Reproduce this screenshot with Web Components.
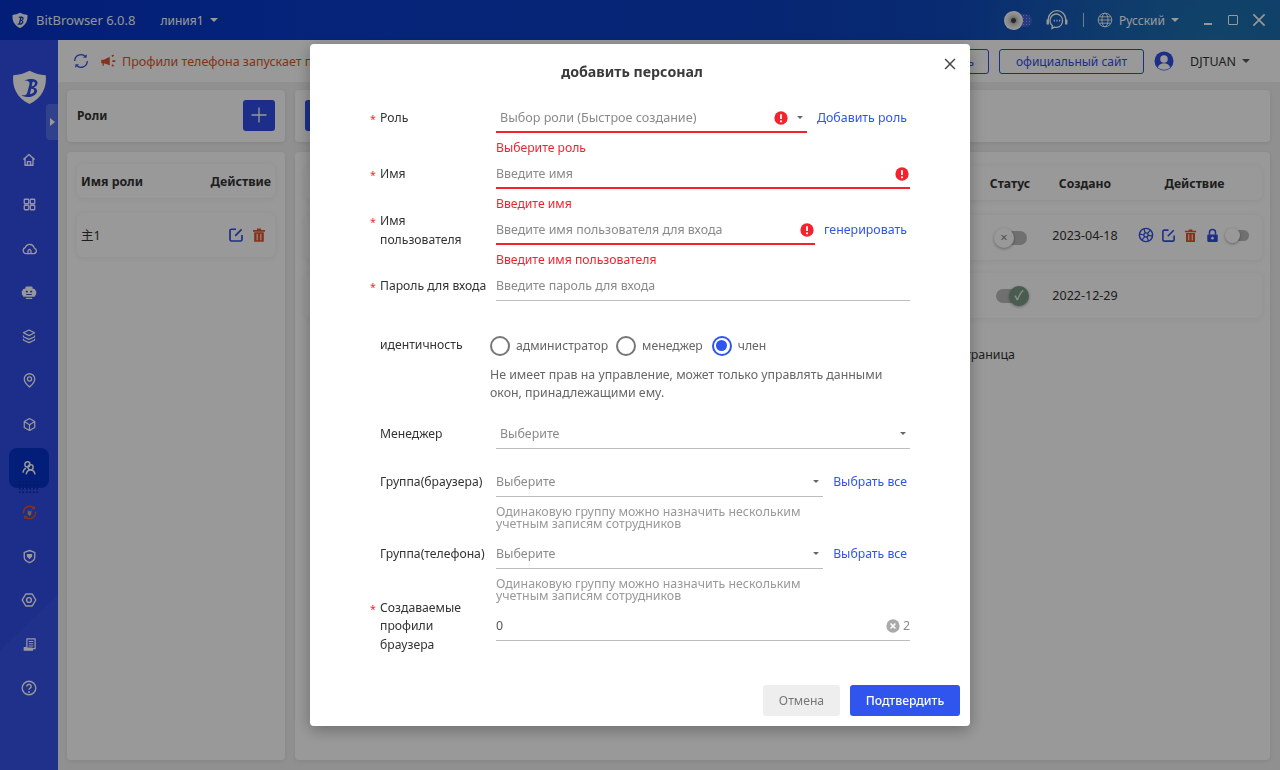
<!DOCTYPE html>
<html lang="ru"><head><meta charset="utf-8"><title>BitBrowser</title>
<style>
html,body{margin:0;height:100%;overflow:hidden}
body{font-family:"Noto Sans","Noto Sans CJK SC",sans-serif;font-size:12px;color:#333}
</style></head><body>
<bb-app></bb-app>
<script>
const ICONS={
home:'<path d="M3 9.500 10 3l7 6.500M5 8v8.500h10V8M8 16.500V12h4v4.500" fill="none" stroke="currentColor" stroke-width="1.700" stroke-linejoin="round"/>',
grid:'<g fill="none" stroke="currentColor" stroke-width="1.700"><rect x="3" y="3" width="6" height="6" rx="1"/><rect x="11" y="3" width="6" height="6" rx="1"/><rect x="3" y="11" width="6" height="6" rx="1"/><rect x="11" y="11" width="6" height="6" rx="1"/></g>',
cloud:'<path d="M6 16h9a3.200 3.200 0 0 0 .6-6.300A5.500 5.500 0 0 0 5 9a3.600 3.600 0 0 0 1 7ZM8.300 16v-3.500l1.700-1.500 1.700 1.500V16" fill="none" stroke="currentColor" stroke-width="1.500" stroke-linejoin="round"/>',
robot:'<path fill-rule="evenodd" d="M7 3h6a1.500 1.500 0 0 1 1.500 1.500V6H16a2 2 0 0 1 2 2v.5h1v5h-1v.5a2 2 0 0 1-2 2H4a2 2 0 0 1-2-2v-.5H1v-5h1V8a2 2 0 0 1 2-2h1.500V4.500A1.500 1.500 0 0 1 7 3ZM6 8.300v2.200h2.500V8.300ZM11.500 8.300v2.200H14V8.300ZM6.500 12.500v1.300h7v-1.300Z" fill="currentColor"/><path d="M6 18h8" stroke="currentColor" stroke-width="1.500"/>',
layers:'<path d="m10 2.500 7 3.500-7 3.500L3 6zM3 9.500c0 1 0 1.500.5 1.800l6.500 3 6.500-3c.5-.3.5-.8.5-1.800M3 13.500c0 1 0 1.500.5 1.800l6.500 3 6.500-3c.5-.3.5-.8.5-1.800" fill="none" stroke="currentColor" stroke-width="1.600" stroke-linejoin="round"/>',
pin:'<path d="M10 18.500s-7-5.500-7-10.500a7 7 0 0 1 14 0c0 5-7 10.500-7 10.500Z" fill="none" stroke="currentColor" stroke-width="1.700"/><circle cx="10" cy="8" r="2.800" fill="none" stroke="currentColor" stroke-width="1.700"/>',
box:'<path d="m10 2 7 4v8l-7 4-7-4V6ZM3 6l7 4.200L17 6M10 10.200V18" fill="none" stroke="currentColor" stroke-width="1.600" stroke-linejoin="round"/>',
team:'<g fill="none" stroke="currentColor" stroke-width="1.800"><circle cx="8" cy="5.500" r="3.200"/><circle cx="12" cy="9" r="3.200"/><path d="M2.500 16c.2-3 1.800-5 3.800-5.800M6.500 18c.4-3.200 2.700-5.500 5.500-5.500s5 2.300 5.500 5.500"/></g>',
sync:'<g fill="none" stroke="currentColor" stroke-width="1.800"><path d="M3 11a7.200 7.200 0 0 1 12.300-6"/><path d="M17 9a7.200 7.200 0 0 1-12.300 6"/></g><path d="m16.500 2.200-.2 4.300-4.200-.6zM3.500 17.800l.2-4.300 4.200.6z" fill="currentColor"/><path d="M7.800 6.500 9 8.500h2l1.200-2v5.500L10 14l-2.200-2z" fill="#c98"/>',
shield:'<path d="M10 2 17 4.500v6.500c0 3.500-3 5.700-7 7.300-4-1.600-7-3.800-7-7.300V4.500Z" fill="none" stroke="currentColor" stroke-width="1.800"/><path d="M6.500 6.500h7v3.500L10 13.500 6.500 10z" fill="currentColor"/>',
hex:'<path d="M6 2.500h8L18.500 10 14 17.500H6L1.500 10Z" fill="none" stroke="currentColor" stroke-width="1.800" stroke-linejoin="round"/><circle cx="10" cy="10" r="3" fill="none" stroke="currentColor" stroke-width="1.800"/>',
doc:'<path d="M6.500 2.500h11v13H14v2H3v-3.500h3.500z" fill="none" stroke="currentColor" stroke-width="1.600" stroke-linejoin="round"/><path d="M9 6h6M9 9h6M9 12h6" stroke="currentColor" stroke-width="1.500"/><path d="M3 14h11v3.500H3z" fill="currentColor"/>',
help:'<circle cx="10" cy="10" r="8.500" fill="none" stroke="currentColor" stroke-width="1.700"/><path d="M7.300 8a2.700 2.700 0 1 1 4.100 2.300c-.9.600-1.400 1-1.400 2" fill="none" stroke="currentColor" stroke-width="1.800"/><circle cx="10" cy="15" r="1.200" fill="currentColor"/>',
edit:'<path d="M10 2.800H4.500a2 2 0 0 0-2 2v10.700a2 2 0 0 0 2 2h11a2 2 0 0 0 2-2V10M9 11l8-8" fill="none" stroke="currentColor" stroke-width="2.100"/>',
trash:'<path d="M2.500 3.800h15v2h-15zM7.500 2h5v1.800h-5zM4 6.500h12V18.500H4z" fill="currentColor"/><path d="M7.700 8.500v8M12.300 8.500v8" stroke="#fff" stroke-width="1.300"/>',
refresh:'<path d="M3 10a7 7 0 0 1 12-4.900M17 10a7 7 0 0 1-12 4.900" fill="none" stroke="currentColor" stroke-width="1.400"/><path d="m16.500 2.500-.4 4-4-.4zM3.500 17.500l.4-4 4 .4z" fill="currentColor"/>',
horn:'<path d="M1.500 8h3l7-3.500v10l-7-2.500V15H3v-3H1.500z" fill="currentColor"/><path d="M14 4l2-1.500M14.500 9.500h3.500M14 14l2 1.500" stroke="currentColor" stroke-width="2" fill="none"/>',
wheel:'<circle cx="10" cy="10" r="8.300" fill="none" stroke="currentColor" stroke-width="1.800"/><circle cx="10" cy="10" r="2.600" fill="none" stroke="currentColor" stroke-width="1.500"/><path d="M7.500 2.500 9 7.500M15.500 4l-3.500 4M18 11l-5.500-.5M13 17.500 11.200 12.300M5 16.500l3-4M2 9l5.500 1" stroke="currentColor" stroke-width="1.500"/>',
lock:'<path d="M6 9V6a4 4 0 0 1 8 0v3" fill="none" stroke="currentColor" stroke-width="2"/><rect x="3" y="8.500" width="14" height="10" rx="1.500" fill="currentColor"/><circle cx="10" cy="13.500" r="1.700" fill="#fff"/>',
user:'<circle cx="10" cy="10" r="9.500" fill="currentColor"/><circle cx="10" cy="8" r="3.800" fill="#fff"/><path d="M3.800 16.500c1-3 3.500-4.300 6.200-4.300s5.200 1.300 6.200 4.300A8.500 8.500 0 0 1 10 18.800a8.500 8.500 0 0 1-6.200-2.300Z" fill="#fff"/>',
headset:'<g fill="none" stroke="currentColor" stroke-width="1.100"><path d="M2.700 11V9.500a7.300 7.300 0 0 1 14.600 0V11"/><path d="M10 5a5.700 5.700 0 0 1 0 11.200c-.8 0-1.500-.1-2.200-.3L5.800 17l.4-2.300A5.500 5.500 0 0 1 10 5Z"/></g><path d="M2.300 9.500v4.300M17.700 9.500v4.300" stroke="currentColor" stroke-width="2"/><path d="M7.300 10.500h1M9.500 10.500h1M11.700 10.500h1" stroke="currentColor" stroke-width="1.400"/>',
globe:'<g fill="none" stroke="currentColor" stroke-width="1.100"><circle cx="10" cy="10" r="8.500"/><ellipse cx="10" cy="10" rx="3.800" ry="8.500"/><path d="M1.500 10h17M2.800 6h14.400M2.800 14h14.400"/></g>',
err:'<circle cx="10" cy="10" r="9.500" fill="currentColor"/><path d="M10 4.500v7" stroke="#fff" stroke-width="2.600"/><circle cx="10" cy="14.700" r="1.600" fill="#fff"/>',
clear:'<circle cx="10" cy="10" r="9.500" fill="currentColor"/><path d="m6.500 6.500 7 7m0-7-7 7" stroke="#fff" stroke-width="2.200"/>',
plus:'<path d="M10 2.500v15M2.500 10h15" stroke="currentColor" stroke-width="1.300"/>',
close:'<path d="m3 3 14 14m0-14L3 17" stroke="currentColor" stroke-width="2"/>',
logo:'<path d="M10 1c3 1.600 6 2.400 9.300 2.600C20 10 17.500 16.500 10 20 2.500 16.500 0 10 .7 3.600 4 3.400 7 2.600 10 1Z" fill="currentColor"/><path d="M7 6.600c2.500-1.200 7.600-1.500 7.600 1.400 0 1.200-1 2.100-2.300 2.500 1.400.2 2.200 1.100 2 2.300-.3 2-3 3.200-5 3.200-1.500 0-3-.4-4-1.200 1.500.4 3 .2 3.400-1.300l1.300-5c.3-1.200-1-2-3-1.900Zm4.800.7-.6 2.600c1.300-.2 1.900-.8 1.900-1.600 0-.8-.5-1.100-1.300-1ZM11 11.300l-.8 3c1.400-.1 2.400-.7 2.500-1.700.1-.9-.6-1.300-1.700-1.300Z" fill="var(--logo-b,#2f4de6)" fill-rule="evenodd"/>'
};
function def(name,css,html,init){
  customElements.define(name,class extends HTMLElement{
    connectedCallback(){
      if(this.shadowRoot)return;
      const r=this.attachShadow({mode:'open'});
      r.innerHTML='<style>'+css+'</style>'+(typeof html==='function'?html(this):html);
      if(init)init(this,r);
    }
  });
}
def('bb-icon',':host{display:inline-flex;flex:none;line-height:0}svg{display:block;width:100%;height:100%}',
  h=>`<svg viewBox="0 0 20 20" aria-hidden="true">${ICONS[h.getAttribute('name')]||''}</svg>`,
  h=>{const s=h.getAttribute('size')||16;h.style.width=s+'px';h.style.height=s+'px';if(h.getAttribute('color'))h.style.color=h.getAttribute('color');});
const caret=(c,s=4)=>`<span style="display:inline-block;width:0;height:0;border:${s}px solid transparent;border-top:${s}px solid ${c};border-bottom:0;flex:none"></span>`;

def('bb-topbar',`:host{display:flex;align-items:center;grid-column:1/3;height:40px;color:#fff;
  background:radial-gradient(circle at 95% 110%,rgba(40,150,160,.45),transparent 22%),linear-gradient(90deg,#0632c8 0%,#0a3ecb 30%,#0b3fc0 60%,#1558b8 100%);font-size:13px}
  .brand{margin-left:12px;display:flex;align-items:center;gap:8px;font-size:13px;opacity:.95}
  .line{margin-left:25px;display:flex;align-items:center;gap:6px;font-size:12px}
  .sp{flex:1}
  .tog{width:28px;height:13px;border-radius:7px;background:radial-gradient(circle,rgba(255,255,255,.4) .8px,transparent 1px) 0 0/3px 3px,#3f62d8;position:relative;margin-right:13px}
  .tog i{position:absolute;left:0;top:-3px;width:19px;height:19px;border-radius:50%;background:radial-gradient(circle,#444 0 2px,#bbb 3px,#ddd 5px,#fff 9px)}
  .div{width:1px;height:14px;background:rgba(255,255,255,.7);margin:0 13px 0 14px}
  .lang{display:flex;align-items:center;gap:6px;font-size:12px}
  .win{display:flex;align-items:center;margin:0 13px 0 25px}
  .min{width:8px;height:2px;background:#fff;align-self:flex-end;margin:0 16px 3px 0}
  .max{width:8px;height:8px;border:1.500px solid #fff;border-radius:1px;margin-right:13px}`,
  `<div class="brand"><bb-icon name="logo" size="16" style="--logo-b:#0632c8"></bb-icon><span>BitBrowser 6.0.8</span></div>
   <div class="line"><span>линия1</span>${caret('#fff')}</div><div class="sp"></div>
   <div class="tog"><i></i></div><bb-icon name="headset" size="24"></bb-icon><div class="div"></div>
   <div class="lang"><bb-icon name="globe" size="16"></bb-icon><span>Русский</span>${caret('#fff')}</div>
   <div class="win"><span class="min"></span><span class="max"></span><bb-icon name="close" size="16"></bb-icon></div>`);

def('bb-nav',`:host{display:flex;width:40px;height:44px;align-items:center;justify-content:center;margin-left:9px;color:#fff;position:relative}
  :host([active]) .w{background:#0632c8}
  .w{width:40px;height:40px;border-radius:8px;display:flex;align-items:center;justify-content:center}
  :host([red]) {color:#e0532a}
  :host([red])::before{content:"";position:absolute;left:9px;top:-10px;width:22px;height:15px;background:radial-gradient(circle,rgba(6,40,170,.9) 1px,transparent 1.200px) 0 0/3.500px 3.500px}`,
  h=>`<div class="w"><bb-icon name="${h.getAttribute('name')}" size="${h.getAttribute('size')||16}"></bb-icon></div>`);

def('bb-sidebar',`:host{display:block;width:58px;background:
   linear-gradient(#3653e8,#3653e8) 0 610px/58px 120px no-repeat,
   linear-gradient(to bottom right,transparent 50%,#3653e8 50.500%) 0 555px/58px 55px no-repeat,#2f4de6;position:relative;overflow:hidden;color:#fff}
  .logo{display:flex;justify-content:flex-start;padding:29px 0 32px 12px;height:37px}
  .tab{position:absolute;right:0;top:64px;width:12px;height:36px;background:rgba(255,255,255,.18);border-radius:4px 0 0 4px;display:flex;align-items:center;justify-content:center}
  .tab i{width:0;height:0;border:4px solid transparent;border-left:5px solid #fff;border-right:0}`,
  `<div class="logo"><bb-icon name="logo" size="35"></bb-icon></div><div class="tab"><i></i></div>
   <bb-nav name="home" size="16"></bb-nav><bb-nav name="grid" size="15"></bb-nav><bb-nav name="cloud" size="17"></bb-nav><bb-nav name="robot" size="16"></bb-nav>
   <bb-nav name="layers" size="16"></bb-nav><bb-nav name="pin" size="15"></bb-nav><bb-nav name="box" size="15"></bb-nav><bb-nav name="team" active size="16"></bb-nav>
   <bb-nav name="sync" red size="17"></bb-nav><bb-nav name="shield" size="15"></bb-nav><bb-nav name="hex" size="16"></bb-nav><bb-nav name="doc" size="15"></bb-nav><bb-nav name="help" size="16"></bb-nav>`);

def('bb-toolbar',`:host{display:flex;align-items:center;height:42px;background:#fff;padding-left:14px;color:#333;font-size:12px;overflow:hidden}
  .w{margin-left:10px;color:#e0532a;display:flex;align-items:center;gap:5px;white-space:nowrap;font-size:12.500px}
  .sp{flex:1}
  .btn{border:1px solid #2f4de6;border-radius:3px;color:#2f4de6;display:flex;align-items:center;justify-content:center;box-sizing:border-box;height:25px}
  .b1{width:60px;justify-content:flex-end;padding-right:14px;margin-right:10px}
  .b2{width:145px}
  .u{margin:0 30px 0 10px;display:flex;align-items:center;gap:6px}
  .u .n{margin-left:10px;font-size:12.500px}`,
  `<bb-icon name="refresh" size="18" color="#2f4de6"></bb-icon>
   <div class="w"><bb-icon name="horn" size="17"></bb-icon><span>Профили телефона запускает п</span></div><div class="sp"></div>
   <div class="btn b1">ь</div><div class="btn b2">официальный сайт</div>
   <div class="u"><bb-icon name="user" size="20" color="#2f4de6"></bb-icon><span class="n">DJTUAN</span>${caret('#555')}</div>`);

def('bb-card',`:host{display:block;background:#fff;border-radius:4px;box-shadow:0 1px 4px rgba(0,0,0,.08);box-sizing:border-box;position:relative}`,`<slot></slot>`);
def('bb-row',`:host{display:flex;align-items:center;background:#fff;border-radius:6px;box-shadow:0 1px 6px rgba(0,0,0,.07)}`,`<slot></slot>`);

def('bb-toggle',`:host{display:inline-block;position:relative;width:30px;height:14px;border-radius:7px;background:#bbb;flex:none}
  i{position:absolute;top:-3px;width:20px;height:20px;border-radius:50%;background:#fff;box-shadow:0 1px 3px rgba(0,0,0,.35);display:flex;align-items:center;justify-content:center;font-style:normal;font-size:13px;line-height:1;color:#888}
  :host([on]) i{background:#7c9a84;color:#fff;right:-3px}
  :host(:not([on])) i{left:-3px}
  :host([small]){width:22px;height:11px}
  :host([small]) i{width:15px;height:15px;top:-2px;left:-2px}`,
  h=>`<i>${h.hasAttribute('small')?'':h.hasAttribute('on')?'✓':'×'}</i>`);

def('bb-main',`:host{display:grid;grid-template-columns:218px 1fr;grid-template-rows:52px 608px;gap:10px;padding:8px 10px 0 9px;background:#f0f0f0;min-width:0}
  .head{display:flex;align-items:center;height:100%;padding:0 10px 2px;box-sizing:border-box;font-weight:700;font-size:12px;color:#333;justify-content:space-between}
  .add{width:32px;height:31px;background:#2f4de6;border-radius:3px;color:#fff;display:flex;align-items:center;justify-content:center}
  .tbl{padding:12px 10px;display:flex;flex-direction:column;gap:15px;height:100%;box-sizing:border-box}
  .l{height:34px;padding:0 4px;justify-content:space-between;font-weight:700;font-size:12.300px}
  .r{height:44px;padding:0 4px;justify-content:space-between;font-size:12.500px}
  .r .nm{margin-top:-2px}
  .ic{display:flex;gap:7px;margin-right:4px}
  .wide{display:grid!important;grid-template-columns:1fr 70px 80px 137px;align-items:center;justify-items:center}
  .wh{height:34px;font-weight:700;font-size:12.200px}
  .wr{height:45px;font-size:12.500px}
  .up{padding-bottom:5px;box-sizing:border-box}
  .ac{display:flex;align-items:center;gap:7px}
  .foot{text-align:right;padding-right:247px;font-size:12.400px;margin-top:13px;color:#333}`,
  `<bb-card><div class="head"><span>Роли</span><div class="add"><bb-icon name="plus" size="20"></bb-icon></div></div></bb-card>
   <bb-card><div class="head"><div class="add"><bb-icon name="plus" size="20"></bb-icon></div></div></bb-card>
   <bb-card><div class="tbl">
     <bb-row class="l"><span>Имя роли</span><span>Действие</span></bb-row>
     <bb-row class="r"><span class="nm">主1</span><span class="ic"><bb-icon name="edit" size="16" color="#2f4de6"></bb-icon><bb-icon name="trash" size="16" color="#e0532a"></bb-icon></span></bb-row>
   </div></bb-card>
   <bb-card><div class="tbl" style="padding:14px 8px 12px 10px">
     <bb-row class="wide wh"><span></span><span>Статус</span><span>Создано</span><span style="margin-left:2px">Действие</span></bb-row>
     <bb-row class="wide wr up"><span></span><bb-toggle style="margin:5px 0 0 4px"></bb-toggle><span>2023-04-18</span><span class="ac"><bb-icon name="wheel" size="16" color="#2f4de6"></bb-icon><bb-icon name="edit" size="15" color="#2f4de6"></bb-icon><bb-icon name="trash" size="15" color="#e0532a"></bb-icon><bb-icon name="lock" size="15" color="#2f4de6"></bb-icon><bb-toggle small></bb-toggle></span></bb-row>
     <bb-row class="wide wr" style="margin-top:-2px"><span></span><bb-toggle on style="margin-left:2px"></bb-toggle><span>2022-12-29</span><span></span></bb-row>
     <div class="foot">страница</div>
   </div></bb-card>`);

def('bb-field',`:host{display:grid;grid-template-columns:126px 1fr;grid-template-rows:29px auto}
  .lab{position:relative;padding-left:10px;color:#333;font-size:12.200px;line-height:18.500px;align-self:center;white-space:pre-line}
  :host([required]) .lab::before{content:"*";color:#f5222d;position:absolute;left:0;top:1px;font-size:10.500px;line-height:18px}
  .ctl{min-width:0;display:flex;align-items:stretch}
  .sub{grid-column:2;font-size:12.200px;line-height:16px;color:#f5222d;height:27px;box-sizing:border-box;padding-top:7px}
  .sub:empty{display:none}`,
  h=>`<div class="lab">${h.getAttribute('label')||''}</div><div class="ctl"><slot></slot></div>
      <div class="sub">${h.getAttribute('error')||''}</div><div style="grid-column:2"><slot name="below"></slot></div>`);

def('bb-input',`:host{display:flex;align-items:center;flex:1;min-width:0;box-sizing:border-box;height:29px;border-bottom:1px solid #bdbdbd;color:#8a8a8a;font-size:12.400px;padding-bottom:1px}
  :host([err]){border-bottom:2px solid #f5222d;padding-bottom:0}
  :host([sel]) .t{padding-left:4px}
  :host([val]) .t{color:#555}
  .t{flex:1;white-space:nowrap;overflow:hidden}
  .c{margin-left:9px;margin-right:4px;display:flex}`,
  h=>`<span class="t">${h.getAttribute('text')||''}</span>`+
     (h.hasAttribute('err')?`<bb-icon name="err" size="14" color="#f5222d" style="margin-right:${h.hasAttribute('caret')?0:1}px"></bb-icon>`:'')+
     (h.hasAttribute('caret')?`<span class="c">${caret('#666',3)}</span>`:'')+
     (h.hasAttribute('clear')?`<bb-icon name="clear" size="14" color="#aaa" style="margin-right:3px"></bb-icon><span>2</span>`:''));

def('bb-link',`:host{display:flex;align-items:center;color:#2f55ee;font-size:12.400px;white-space:nowrap;padding:0 3px 2px 0;margin-left:10px}`,`<slot></slot>`);
def('bb-radio',`:host{display:inline-flex;align-items:center;gap:6px;color:#666;font-size:12.200px}
  i{width:16px;height:16px;border:2px solid #777;border-radius:50%;display:block;position:relative;flex:none}
  :host([on]) i{border-color:#2f55ee}
  :host([on]) i::after{content:"";position:absolute;inset:2.500px;border-radius:50%;background:#2f55ee}`,
  `<i></i><slot></slot>`);

def('bb-modal',`:host{position:fixed;inset:0;background:rgba(0,0,0,.4);display:flex;align-items:center;justify-content:center}
  .box{width:660px;height:682px;background:#fff;border-radius:4px;box-shadow:0 4px 16px rgba(0,0,0,.3);box-sizing:border-box;position:relative;display:flex;flex-direction:column}
  h2{margin:0;padding:18px 16px 0 0;text-align:center;font-size:14.200px;line-height:19px;color:#3a3a3a;font-weight:700}
  .x{position:absolute;right:13px;top:13px;color:#444}
  .form{padding:23px 60px 0;display:flex;flex-direction:column}
  .hint{font-size:12.400px;line-height:12px;color:#999;padding:9px 0 10px}
  .ident{font-size:12.350px;line-height:18px;color:#666;padding:6px 0 18px;margin-left:-6px;width:410px}
  .radios{display:flex;align-items:center;gap:8px;margin-left:-6px}
  .foot{margin-top:auto;padding:0 10px 10px;display:flex;justify-content:flex-end;gap:10px}
  button{font:inherit;font-size:12.200px;border:0;border-radius:3px;height:31px}
  .c{width:77px;background:#eee;color:#777}
  .o{width:110px;background:#2f55ee;color:#fff;font-weight:500}`,
  `<div class="box"><h2>добавить персонал</h2><bb-icon class="x" name="close" size="14"></bb-icon>
   <div class="form">
    <bb-field required label="Роль" error="Выберите роль"><bb-input sel err caret style="font-size:12.600px" text="Выбор роли (Быстрое создание)"></bb-input><bb-link>Добавить роль</bb-link></bb-field>
    <bb-field required label="Имя" error="Введите имя"><bb-input err text="Введите имя"></bb-input></bb-field>
    <bb-field required label="Имя
пользователя" error="Введите имя пользователя"><bb-input err text="Введите имя пользователя для входа"></bb-input><bb-link style="margin-left:9px">генерировать</bb-link></bb-field>
    <bb-field required label="Пароль для входа" style="margin-bottom:30px"><bb-input text="Введите пароль для входа"></bb-input></bb-field>
    <bb-field label="идентичность"><div class="radios"><bb-radio>администратор</bb-radio><bb-radio>менеджер</bb-radio><bb-radio on style="margin-left:1px">член</bb-radio></div>
      <div slot="below" class="ident">Не имеет прав на управление, может только управлять данными окон, принадлежащими ему.</div></bb-field>
    <bb-field label="Менеджер" style="margin-bottom:19px"><bb-input sel caret text="Выберите"></bb-input></bb-field>
    <bb-field label="Группа(браузера)"><bb-input caret text="Выберите"></bb-input><bb-link style="font-size:12.250px">Выбрать все</bb-link>
      <div slot="below" class="hint">Одинаковую группу можно назначить нескольким<br>учетным записям сотрудников</div></bb-field>
    <bb-field label="Группа(телефона)"><bb-input caret text="Выберите"></bb-input><bb-link style="font-size:12.250px">Выбрать все</bb-link>
      <div slot="below" class="hint">Одинаковую группу можно назначить нескольким<br>учетным записям сотрудников</div></bb-field>
    <bb-field required label="Создаваемые
профили
браузера"><bb-input val clear text="0"></bb-input></bb-field>
   </div>
   <div class="foot"><button class="c">Отмена</button><button class="o">Подтвердить</button></div></div>`);

def('bb-app',`:host{display:grid;grid-template-columns:58px 1fr;grid-template-rows:40px 42px 1fr;height:100vh;overflow:hidden;background:#f0f0f0}
  bb-topbar{grid-row:1}bb-sidebar{grid-row:2/4}bb-toolbar{grid-column:2}bb-main{grid-column:2}`,
  `<bb-topbar></bb-topbar><bb-sidebar></bb-sidebar><bb-toolbar></bb-toolbar><bb-main></bb-main><bb-modal></bb-modal>`);
</script>
</body></html>
